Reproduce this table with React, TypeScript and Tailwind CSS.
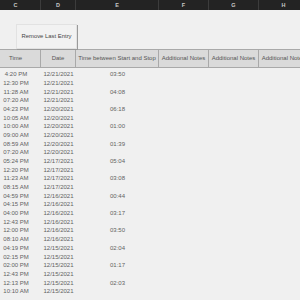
const cols = "grid grid-cols-[50px_35px_83px_50px_50px_50px]";

const rows: [string, string, string][] = [
  ["4:20 PM", "12/21/2021", "03:50"],
  ["12:30 PM", "12/21/2021", ""],
  ["11:28 AM", "12/21/2021", "04:08"],
  ["07:20 AM", "12/21/2021", ""],
  ["04:23 PM", "12/20/2021", "06:18"],
  ["10:05 AM", "12/20/2021", ""],
  ["10:00 AM", "12/20/2021", "01:00"],
  ["09:00 AM", "12/20/2021", ""],
  ["08:59 AM", "12/20/2021", "01:39"],
  ["07:20 AM", "12/20/2021", ""],
  ["05:24 PM", "12/17/2021", "05:04"],
  ["12:20 PM", "12/17/2021", ""],
  ["11:23 AM", "12/17/2021", "03:08"],
  ["08:15 AM", "12/17/2021", ""],
  ["04:59 PM", "12/16/2021", "00:44"],
  ["04:15 PM", "12/16/2021", ""],
  ["04:00 PM", "12/16/2021", "03:17"],
  ["12:43 PM", "12/16/2021", ""],
  ["12:00 PM", "12/16/2021", "03:50"],
  ["08:10 AM", "12/16/2021", ""],
  ["04:19 PM", "12/15/2021", "02:04"],
  ["02:15 PM", "12/15/2021", ""],
  ["02:00 PM", "12/15/2021", "01:17"],
  ["12:43 PM", "12/15/2021", ""],
  ["12:13 PM", "12/15/2021", "02:03"],
  ["10:10 AM", "12/15/2021", ""],
];

const letters = ["C", "D", "E", "F", "G", "H"];
const headers = ["Time", "Date", "Time between Start and Stop", "Additional Notes", "Additional Notes", "Additional Notes"];

export default function App() {
  return (
    <div className="w-[300px] h-[300px] overflow-hidden bg-[#f0f0f0] font-['Liberation_Sans',Arial,sans-serif] text-[#626262]">
      <div className="-ml-[9px] w-[318px]">
        {/* column letters */}
        <div className={`${cols} h-[10px] bg-[#232323]`}>
          {letters.map((l) => (
            <div key={l} className="flex items-center justify-center border-r border-[#3c3c3c] text-[5.5px] font-bold text-[#c8c8c8]">
              {l}
            </div>
          ))}
        </div>

        {/* button area */}
        <div className="h-[39px] pt-[11px] pl-[25px]">
          <button className="w-[61px] h-[25px] bg-[#f2f2f2] border border-[#e2e2e2] shadow-[1px_1px_0_#9a9a9a] text-[5.9px] text-[#444]">
            Remove Last Entry
          </button>
        </div>

        {/* header row */}
        <div className={`${cols} h-[19px] bg-[#dadada] border-y border-[#a9a9a9]`}>
          {headers.map((h, i) => (
            <div key={i} className="flex items-center justify-center whitespace-nowrap overflow-hidden border-r border-[#a9a9a9] text-[6px] text-[#555]">
              {h}
            </div>
          ))}
        </div>

        {/* data rows */}
        <div className="pt-[2.4px]">
          {rows.map((r, i) => (
            <div key={i} className={`${cols} h-[8.68px] text-[6px] leading-[8.68px]`}>
              <div className="text-center">{r[0]}</div>
              <div className="text-center">{r[1]}</div>
              <div className="text-center">{r[2]}</div>
              <div />
              <div />
              <div />
            </div>
          ))}
        </div>
      </div>
    </div>
  );
}
